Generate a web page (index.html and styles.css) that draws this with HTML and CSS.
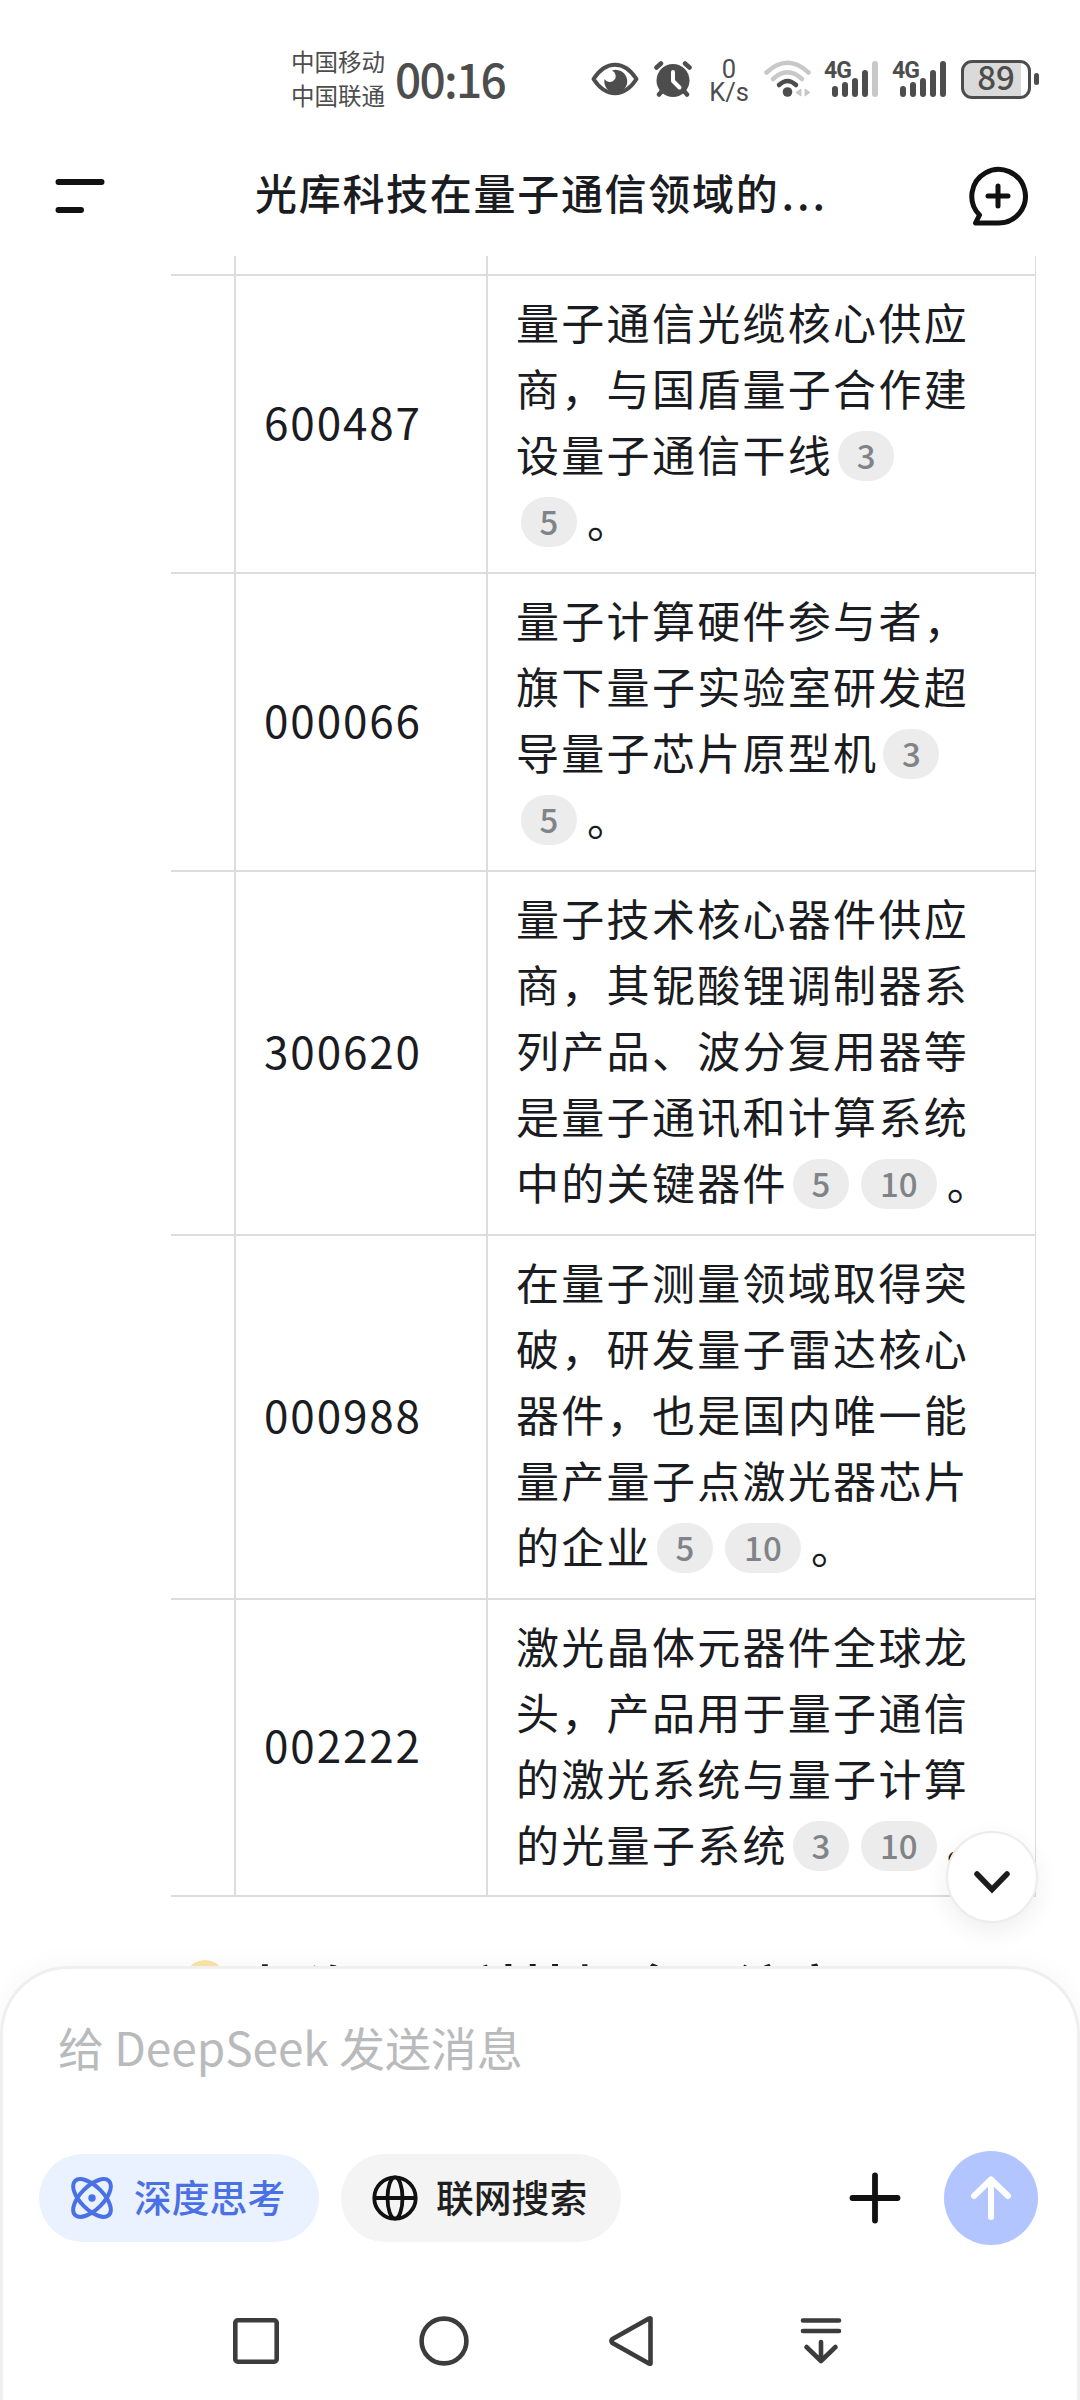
FILE: index.html
```html
<!DOCTYPE html>
<html lang="zh-CN">

<head>
    <meta charset="UTF-8">
    <meta name="viewport" content="width=device-width, initial-scale=1.0">
    <link rel="stylesheet" href="styles.css">
    <title>DeepSeek</title>
</head>

<body>

    <div class="statusbar">
        <div class="carrier">中国移动<br>中国联通</div>
        <div class="clock">00:16</div>

        <svg class="eye" width="48" height="34" viewBox="0 0 48 34">
            <path d="M2.500 17C9 7 16 2.700 24 2.700S39 7 45.500 17C39 27 32 31.300 24 31.300S9 27 2.500 17Z" fill="none" stroke="#4d4d4d" stroke-width="4" stroke-linejoin="round"/>
            <path d="M21 8.500A11.500 11.500 0 1 1 13.500 17A6 6 0 1 0 21 8.500Z" fill="#4d4d4d"/>
        </svg>
        <svg class="alarm" width="38" height="36" viewBox="0 0 38 36">
            <circle cx="19" cy="19.500" r="16.500" fill="#4d4d4d"/>
            <path d="M2.500 6.500L7 2.500M35.500 6.500L31 2.500M8 30L5 33.500M30 30L33 33.500" stroke="#4d4d4d" stroke-width="4.500" stroke-linecap="round"/>
            <path d="M19 11V20L25.500 26.500" fill="none" stroke="#fff" stroke-width="4" stroke-linecap="round" stroke-linejoin="round"/>
        </svg>
        <div class="speed"><span>0</span><span>K/s</span></div>
        <svg class="wifi" width="48" height="38" viewBox="0 0 48 38">
            <path d="M2.500 12.500Q23.500 -7 44.500 12.500" fill="none" stroke="#c8c8c8" stroke-width="4.500" stroke-linecap="round"/>
            <path d="M9 19Q23.500 5.500 38 19" fill="none" stroke="#c8c8c8" stroke-width="4.500" stroke-linecap="round"/>
            <path d="M15 25Q23.500 17 32 25" fill="none" stroke="#4d4d4d" stroke-width="4.500" stroke-linecap="round"/>
            <circle cx="23.500" cy="32" r="4.800" fill="#4d4d4d"/>
            <path d="M37 29V36L32 32.500ZM41 29V36L46 32.500Z" fill="#c8c8c8" stroke="#c8c8c8" stroke-width="1"/>
        </svg>
        <div class="signal">
            <span>4G</span>
            <svg width="56" height="38" viewBox="0 0 56 38">
                <path d="M11 29V34M21 25V34M31 21V34M41 13V34" stroke="#4d4d4d" stroke-width="6" stroke-linecap="round"/>
                <path d="M51 4V34" stroke="#c8c8c8" stroke-width="6" stroke-linecap="round"/>
            </svg>
        </div>
        <div class="signal">
            <span>4G</span>
            <svg width="56" height="38" viewBox="0 0 56 38">
                <path d="M11 29V34M21 25V34M31 21V34M41 13V34M51 4V34" stroke="#4d4d4d" stroke-width="6" stroke-linecap="round"/>
            </svg>
        </div>
        <div class="battery"><span>89</span></div>
        <div class="battery-tip"></div>
    </div>

    <div class="header">
        <svg class="menu" width="50" height="36" viewBox="0 0 50 36">
            <path d="M3.500 4H46.500M3.500 32H26" stroke="#111" stroke-width="6" stroke-linecap="round"/>
        </svg>
        <div class="title">光库科技在量子通信领域的<span>...</span></div>
        <svg class="new-chat" width="60" height="60" viewBox="0 0 60 60">
            <path d="M7.500 57H30A26.800 26.800 0 1 0 11.500 49L7.500 57Z" fill="none" stroke="#111" stroke-width="5" stroke-linejoin="round"/>
            <path d="M30 20V40M20 30H40" stroke="#111" stroke-width="5" stroke-linecap="round"/>
        </svg>
    </div>

    <div class="content">
        <table class="stocks">
            <tr class="stub">
                <td class="c1"></td>
                <td class="c2"></td>
                <td class="c3"></td>
            </tr>
            <tr>
                <td></td>
                <td class="code">600487</td>
                <td class="desc">量子通信光缆核心供应<br>商，与国盾量子合作建<br>设量子通信干线<span class="cite">3</span><br><span class="cite end">5</span>。</td>
            </tr>
            <tr>
                <td></td>
                <td class="code">000066</td>
                <td class="desc">量子计算硬件参与者，<br>旗下量子实验室研发超<br>导量子芯片原型机<span class="cite">3</span><br><span class="cite end">5</span>。</td>
            </tr>
            <tr>
                <td></td>
                <td class="code">300620</td>
                <td class="desc">量子技术核心器件供应<br>商，其铌酸锂调制器系<br>列产品、波分复用器等<br>是量子通讯和计算系统<br>中的关键器件<span class="cite">5</span><span class="cite wide end">10</span>。</td>
            </tr>
            <tr>
                <td></td>
                <td class="code">000988</td>
                <td class="desc">在量子测量领域取得突<br>破，研发量子雷达核心<br>器件，也是国内唯一能<br>量产量子点激光器芯片<br>的企业<span class="cite">5</span><span class="cite wide end">10</span>。</td>
            </tr>
            <tr class="last">
                <td></td>
                <td class="code">002222</td>
                <td class="desc">激光晶体元器件全球龙<br>头，产品用于量子通信<br>的激光系统与量子计算<br>的光量子系统<span class="cite">3</span><span class="cite wide end">10</span>。</td>
            </tr>
        </table>

        <div class="section-title">
            <i class="bulb"></i>
            <h2>投资量子科技概念要注意</h2>
        </div>

        <button class="scroll-down">
            <svg width="40" height="26" viewBox="0 0 40 26">
                <path d="M5 5L20 20.500L35 5" fill="none" stroke="#1c1c1c" stroke-width="5.500" stroke-linecap="round" stroke-linejoin="miter"/>
            </svg>
        </button>
    </div>

    <div class="composer">
        <div class="placeholder">给 DeepSeek 发送消息</div>
        <div class="tools">
            <button class="pill active">
                <svg width="44" height="44" viewBox="0 0 44 44" fill="none" stroke="#4a70e6" stroke-width="4">
                    <ellipse cx="22" cy="22" rx="11.500" ry="24" transform="rotate(45 22 22)"/>
                    <ellipse cx="22" cy="22" rx="11.500" ry="24" transform="rotate(-45 22 22)"/>
                    <circle cx="22" cy="22" r="3.700" fill="#4a70e6" stroke="none"/>
                </svg>
                <span>深度思考</span>
            </button>
            <button class="pill">
                <svg width="46" height="46" viewBox="0 0 46 46" fill="none" stroke="#111" stroke-width="3.800">
                    <circle cx="23" cy="23" r="20.700"/>
                    <ellipse cx="23" cy="23" rx="7.500" ry="20.700"/>
                    <path d="M2.500 23H43.500"/>
                </svg>
                <span>联网搜索</span>
            </button>
            <svg class="plus" width="52" height="52" viewBox="0 0 52 52">
                <path d="M26 3.500V48.500M3.500 26H48.500" stroke="#111" stroke-width="5.800" stroke-linecap="round"/>
            </svg>
            <button class="send">
                <svg width="42" height="46" viewBox="0 0 42 46">
                    <path d="M21 42V4.500M4 21L21 4.500L38 21" fill="none" stroke="#fff" stroke-width="6" stroke-linecap="round" stroke-linejoin="round"/>
                </svg>
            </button>
        </div>

        <div class="navbar">
            <svg width="50" height="52" viewBox="0 0 50 52"><rect x="4.300" y="5.300" width="41.400" height="41.400" rx="2.500"/></svg>
            <svg width="50" height="52" viewBox="0 0 50 52"><circle cx="25" cy="26" r="22.400"/></svg>
            <svg width="50" height="52" viewBox="0 0 50 52"><path d="M42.500 3.500V48.500Q42 49 41 48.500L4.500 28Q2.500 26 4.500 24L41 3.500Q42 3 42.500 3.500Z"/></svg>
            <svg width="50" height="52" viewBox="0 0 50 52"><path d="M7 5.500H43M7 16H43M25 27V46M10.500 32L25 46L39.500 32"/></svg>
        </div>
    </div>

</body>

</html>
```

FILE: styles.css
```css
* {
    box-sizing: border-box;
}

body {
    margin: 0;
    width: 1080px;
    height: 2400px;
    overflow: hidden;
    display: flex;
    flex-direction: column;
    background-color: #fff;
    font-family: "Noto Sans CJK SC", sans-serif;
    color: #1a1c22;
}

button {
    border: none;
    padding: 0;
    font-family: inherit;
}

svg {
    display: block;
    flex: none;
}

/* status bar */
.statusbar {
    height: 120px;
    padding: 38px 0 0 291px;
    display: flex;
    align-items: center;
    color: #4d4d4d;
}

.carrier {
    width: 95px;
    padding-bottom: 2px;
    font-size: 23.5px;
    line-height: 34px;
    white-space: nowrap;
}

.clock {
    width: 205px;
    padding-left: 9px;
    padding-bottom: 2px;
    font-size: 46px;
    font-weight: 500;
    line-height: 60px;
    letter-spacing: -1.700px;
}

.alarm {
    margin-left: 15px;
}

.speed {
    width: 38px;
    margin-left: 18px;
    display: flex;
    flex-direction: column;
    align-items: center;
    font-family: Roboto, sans-serif;
    font-size: 25.500px;
    line-height: 23px;
    padding-top: 4px;
}

.wifi {
    margin-left: 16px;
}

.signal {
    position: relative;
    margin-left: 12px;
}

.signal span {
    position: absolute;
    left: 0;
    top: 1px;
    font-family: Roboto, sans-serif;
    font-size: 23px;
    font-weight: 700;
    line-height: 20px;
    letter-spacing: -1px;
}

.battery {
    width: 70px;
    height: 39px;
    margin-left: 13px;
    border: 3px solid #4d4d4d;
    border-radius: 11px;
    background: linear-gradient(to right, #dadada 57px, #fff 57px);
    display: flex;
    align-items: center;
    justify-content: center;
    font-size: 33px;
    font-weight: 500;
    line-height: 32px;
}

.battery span {
    margin-bottom: 7px;
}

.battery-tip {
    width: 5px;
    height: 12px;
    margin-left: 3px;
    border-radius: 3px;
    background-color: #4d4d4d;
}

/* header */
.header {
    height: 136px;
    padding: 16px 52px 0 55px;
    display: flex;
    align-items: center;
}

.title {
    flex: 1;
    margin-left: 150px;
    font-size: 42px;
    font-weight: 500;
    line-height: 60px;
    letter-spacing: 1.700px;
    padding-bottom: 9px;
    white-space: nowrap;
}

.title span {
    margin-left: 2px;
    letter-spacing: 3px;
}

/* conversation */
.content {
    position: relative;
    height: 1710px;
    padding-left: 171px;
    overflow: hidden;
}

.stocks {
    width: 865px;
    table-layout: fixed;
    border-spacing: 0;
}

.stocks td {
    padding: 0;
    border-right: 2px solid #dcdcdc;
    border-bottom: 2px solid #dcdcdc;
}

.stocks td:last-child {
    border-right-width: 1px;
}

.stocks .stub td {
    height: 20px;
}

.c1 {
    width: 65px;
}

.c2 {
    width: 252px;
}

.stocks .code {
    padding: 0 0 7px 28px;
    font-size: 44px;
    letter-spacing: 1.900px;
}

.stocks .desc {
    padding: 12px 0 20px 28px;
    font-size: 43px;
    line-height: 66px;
    letter-spacing: 2.300px;
    white-space: nowrap;
}

.stocks .last .desc {
    padding-bottom: 19px;
}

.cite {
    display: inline-block;
    width: 56px;
    height: 50px;
    margin: 0 7px 0 5px;
    border-radius: 25px;
    background-color: #ececec;
    color: #808488;
    font-size: 33px;
    font-weight: 500;
    line-height: 48px;
    letter-spacing: 0;
    text-align: center;
    vertical-align: 3px;
}

.wide {
    width: 76px;
}

.end {
    margin-right: 10px;
}

.section-title {
    margin-top: 58px;
    display: flex;
    align-items: flex-start;
}

.section-title h2 {
    margin: -6px 0 0 29px;
    font-size: 50px;
    line-height: 72px;
    letter-spacing: 3.600px;
    white-space: nowrap;
}

.bulb {
    width: 40px;
    height: 40px;
    margin: 5px 0 0 14px;
    border-radius: 50%;
    background-color: #fbe5a5;
}

.scroll-down {
    position: absolute;
    left: 946px;
    top: 1575px;
    width: 92px;
    height: 92px;
    border: 2px solid #ececec;
    border-radius: 50%;
    background-color: #fff;
    box-shadow: 0 8px 24px rgba(0, 0, 0, 0.07);
    display: flex;
    align-items: center;
    justify-content: center;
}

.scroll-down svg {
    margin-top: 9px;
}

/* composer */
.composer {
    position: relative;
    flex: 1;
    border: 3px solid #efefef;
    border-bottom: none;
    border-radius: 68px 68px 0 0;
    background-color: #fff;
    box-shadow: 0 -2px 28px rgba(0, 0, 0, 0.035);
}

.placeholder {
    padding: 42px 0 0 55px;
    font-size: 46px;
    line-height: 70px;
    letter-spacing: -0.050px;
    color: #b8babc;
}

.tools {
    margin-top: 70px;
    padding: 0 39px 0 36px;
    display: flex;
    align-items: center;
}

.pill {
    width: 280px;
    height: 88px;
    margin-right: 22px;
    padding-left: 31px;
    border-radius: 44px;
    background-color: #f4f4f4;
    color: #1f1f1f;
    display: flex;
    align-items: center;
    gap: 18px;
    font-size: 37.800px;
    font-weight: 500;
    line-height: 60px;
}

.pill span {
    margin-bottom: 4px;
}

.active {
    background-color: #eaf1ff;
    color: #4a70e6;
    gap: 20px;
}

.plus {
    margin-left: auto;
    margin-right: 43px;
}

.send {
    width: 94px;
    height: 94px;
    border-radius: 50%;
    background-color: #b2c5ff;
    display: flex;
    align-items: center;
    justify-content: center;
}

/* system navigation */
.navbar {
    margin-top: 70px;
    padding: 0 231px 0 228px;
    display: flex;
    justify-content: space-between;
}

.navbar svg {
    fill: none;
    stroke: #3c3c3c;
    stroke-width: 4.600;
    stroke-linecap: round;
    stroke-linejoin: round;
}
```
